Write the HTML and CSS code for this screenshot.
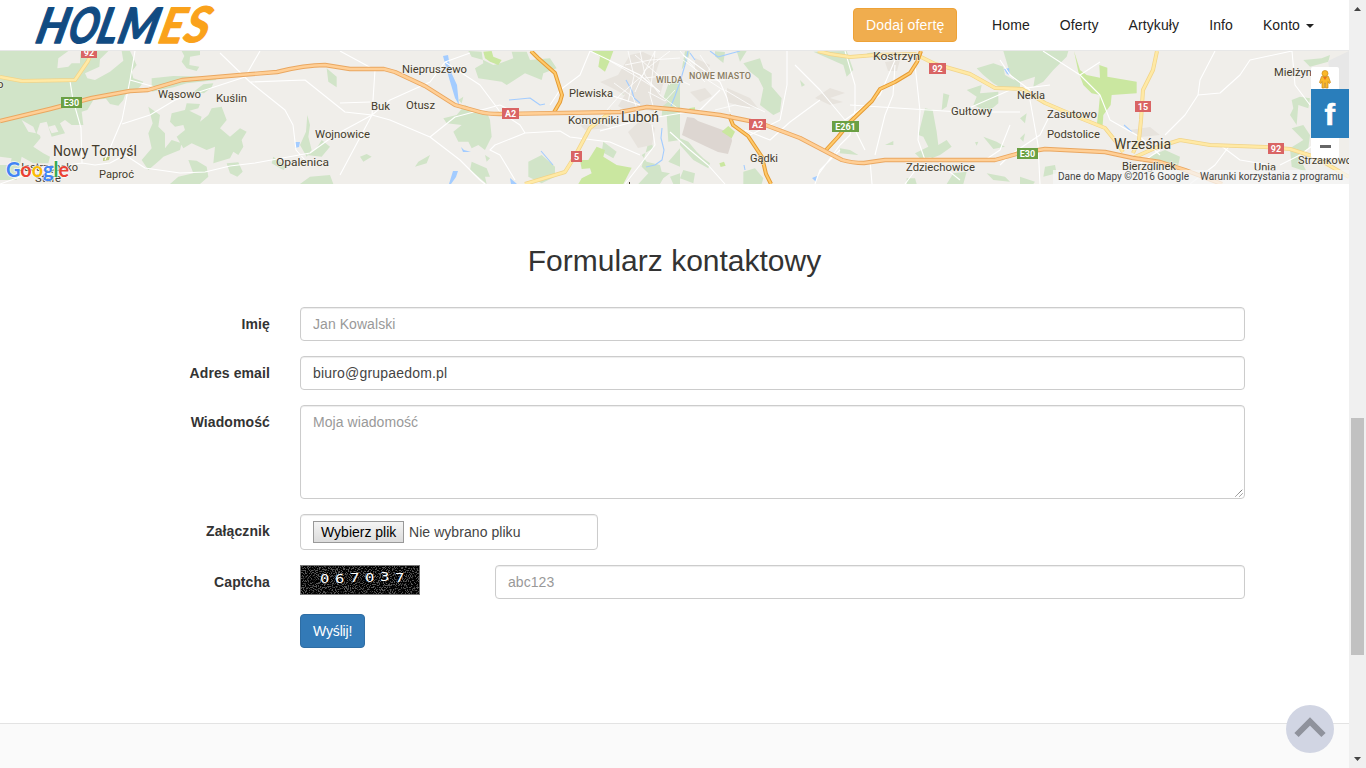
FILE: index.html
```html
<!DOCTYPE html>
<html lang="pl">
<head>
<meta charset="utf-8">
<title>Holmes - kontakt</title>
<link rel="stylesheet" href="styles.css">
</head>
<body>
<div class="page">
  <header class="navbar">
    <svg class="logo" width="190" height="50" viewBox="32 0 190 50" role="img" aria-label="HOLMES">
      <g class="logo-text" transform="translate(34 43) skewX(-14)">
        <text x="0" y="0" textLength="31" lengthAdjust="spacingAndGlyphs">H</text>
        <text x="32" y="0" textLength="29" lengthAdjust="spacingAndGlyphs">O</text>
        <text x="61" y="0" textLength="20" lengthAdjust="spacingAndGlyphs">L</text>
        <text x="82" y="0" textLength="39" lengthAdjust="spacingAndGlyphs">M</text>
        <text class="logo-accent" x="123" y="0" textLength="24" lengthAdjust="spacingAndGlyphs">E</text>
        <text class="logo-accent" x="148" y="-1" textLength="24" lengthAdjust="spacingAndGlyphs">S</text>
      </g>
    </svg>
    <nav class="nav">
      <a class="btn btn-warning">Dodaj ofertę</a>
      <a class="nav-link">Home</a>
      <a class="nav-link">Oferty</a>
      <a class="nav-link">Artykuły</a>
      <a class="nav-link">Info</a>
      <a class="nav-link">Konto <span class="caret"></span></a>
    </nav>
  </header>

  <section class="map">
    <svg class="map-canvas" width="1349" height="133" viewBox="0 51 1349 133">
      <rect x="0" y="51" width="1349" height="133" fill="#f0eeea"/>
      <!-- forests -->
      <g class="forest">
        <g transform="scale(.33333)">
          <path d="M0 153H205L175 175 172 205 205 200 215 190 240 190 240 165 245 153H325L300 178 298 200 255 220 262 235 285 240 330 215 370 182 365 153H390L410 195 395 215 400 235 430 245 420 260 405 272 390 275 375 285 370 300 355 317 330 312 318 296 280 300 262 330 245 335 250 375 215 375 195 360 180 370 195 400 155 410 140 365 120 370 110 400 125 410 100 440 130 460 150 470 145 490 100 490 65 470 50 540 0 540Z"/>
          <path d="M545 153H600V165L570 170 568 195 598 200 590 213 560 205 545 185 553 168ZM455 235 520 228 640 230 650 240 560 250 520 262 455 275ZM610 253 640 250 635 262 612 280 580 276ZM515 340 555 330 560 310 600 312 595 325 568 332 605 350 600 365 625 345 635 325 665 320 680 360 660 385 690 410 720 385 740 395 725 420 730 440 715 465 700 455 690 475 640 490 645 440 620 450 575 430 550 445 530 410 555 390 550 375 525 380 510 365ZM445 320 480 345 475 380 495 400 495 445 515 420 545 430 540 450 490 470 480 480 445 510 425 480 455 445 445 400 458 370ZM565 480 590 482 620 500 625 530 600 552H510L535 530 580 520ZM680 490 715 487 728 515 712 530 690 520ZM980 205 1010 230 1010 262 985 245ZM922 345 930 375 925 410 935 450 920 470 900 435 918 395ZM965 420 950 445 920 465 965 470 990 440ZM820 470 860 500 850 510 815 490ZM930 530 990 525 1000 552H900Z"/>
        </g>
        <g transform="translate(340 45) scale(.33333)">
          <path d="M385 18 425 20 430 55 405 70 415 100 485 110 500 120 555 85 605 105 610 85 650 70 630 40 570 45 560 20H515L520 40 480 55 460 60 430 45 395 35ZM350 210 375 180 400 195 440 200 450 225 455 275 435 315 415 300 395 310 385 290 355 290 340 260 365 240 320 235 310 220ZM605 330 645 365 645 395 605 415 565 395 565 350ZM395 350 440 370 450 395 435 395 440 417 420 400 390 375ZM840 100 880 110 850 150 835 135ZM930 275 940 310 905 330 920 350 960 360 965 380 990 385 970 400 960 417H895L925 385 905 365ZM985 130 1020 115V285L985 290 980 210ZM985 350 1020 310V365ZM790 290 830 320 820 340 785 320ZM60 335 80 327 95 335 70 350ZM235 350 270 330 260 355 225 365ZM435 330 450 340 440 350ZM990 395 1020 385V417H1000ZM355 165 370 155 365 175Z"/>
        </g>
        <g transform="translate(680 45) scale(.33333)">
          <path d="M170 18H200L180 50ZM190 55 240 40 250 70 275 85 275 125 305 160 300 200 280 210 240 180 250 130 235 100 210 80ZM400 20 500 18 520 75 500 95 490 60ZM560 25 595 20 590 45ZM890 70 940 55 970 65 975 90 1020 115V130L965 130 940 115 910 90ZM860 135 905 120 900 145 955 140 955 175 925 200 880 180 890 155ZM790 145 808 150 800 185 785 195ZM735 190 758 195 770 260 775 300 765 335 720 340 705 325 745 305 730 275 715 270ZM750 315 800 285 815 305 780 330 755 340ZM615 300 640 288 640 300ZM885 292 895 290 890 302ZM910 275 950 290 975 305 940 312ZM480 310 510 315 535 330 480 325ZM0 280 25 290 50 320 70 340 90 355 85 370 40 345 0 300ZM10 375 45 385 40 415 0 400ZM190 380 225 370 250 400 245 417H190ZM820 385 860 380 850 417H800ZM920 385 975 395 990 410 940 405ZM680 400 705 400 710 417H680ZM360 105 375 120 365 125ZM970 18H1020V130L990 85Z"/>
        </g>
        <g transform="translate(600 48) scale(.33333)">
          <path d="M205 108 240 90 215 195 185 205 190 150ZM270 10 262 40 245 65 255 10ZM345 10 375 12 370 45 345 25Z"/>
        </g>
        <g transform="translate(1020 45) scale(.33333)">
          <path d="M0 18H145L140 35 100 75 70 110 40 125 45 95 0 110ZM0 220 20 205 15 235ZM815 165 840 155 870 160 865 190 835 180 830 240 810 210 820 190ZM815 250 850 240 870 270 865 310 835 330 860 380 815 365 810 310 850 285ZM385 335 435 315 480 335 475 360 440 365 410 350ZM75 365 105 360 110 385 70 395ZM0 280 15 265 10 290ZM0 395 45 410 40 417H0ZM850 45 905 40 930 30 925 50 870 65Z"/>
        </g>
      </g>
      <!-- clearings -->
      <g class="ground" transform="scale(.33333)">
        <path d="M65 360 100 380 108 400 85 395ZM145 380 165 375 175 395 155 400ZM0 470 35 475 30 495 0 495ZM120 405 150 410 160 435 125 430Z"/>
      </g>
      <!-- built-up areas -->
      <g class="urban">
        <path d="M630 55 643 52 660 60 655 75 665 78 660 95 668 102 655 112 640 108 628 112 618 106 625 95 612 88 600 82 618 75ZM643 118 655 128 652 145 638 148 628 132ZM727 88 750 98 758 108 740 106 727 102ZM690 92 705 88 712 96 700 102ZM695 58 710 65 706 75 695 70ZM580 125 600 123 610 128 585 130ZM1130 130 1150 127 1160 135 1141 137ZM885 62 900 60 897 71 888 71ZM815 98 830 88 845 93 830 98 843 102 830 105Z"/>
        <path class="urban-dark" d="M687 117 694 118 698 121 731 133 732 141 728 154 718 152 705 146 682 135Z"/>
        <path class="urban-cool" d="M1328 61 1349 51V105H1335Z"/>
      </g>
      <!-- parks -->
      <g class="park">
        <g transform="translate(340 45) scale(.33333)"><path d="M430 20 455 18 460 35 485 45 475 60 450 50 435 40ZM755 18H820L810 45 795 80 775 65 780 35ZM720 345 745 345 770 305 795 315 790 335 830 360 875 368 850 417H715L725 400 755 385 750 370 725 372Z"/></g>
        <g transform="translate(680 45) scale(.33333)"><path d="M125 260 145 243 165 260 155 280ZM118 355 132 350 137 362 122 366ZM25 190 45 187 45 197Z"/></g>
        <g transform="translate(1020 45) scale(.33333)"><path d="M162 18 180 75 200 90 240 98 238 60 262 68 262 95 350 110 350 145 275 150 272 180 250 210 248 240 230 240 235 205 240 150 215 145 190 120 175 80Z"/></g>
        <path class="sand" d="M103 158 110 156 109 160 103 161Z"/>
      </g>
      <!-- water -->
      <g class="water">
        <path d="M443 56 448 55 451 72 457 85 459 105 455 98 449 78ZM449 184 453 171 458 171 456 177 451 184ZM461 147 464 150 471 152 463 152ZM510 178 517 184H511ZM295 142 300 142 299 147 295 148ZM1004 69 1009 68 1010 75 1007 74ZM812 178 817 176 816 182Z"/>
        <path class="river" d="M509 100 520 99 530 98 540 105 545 104M541 151 553 165M626 80 632 91 634 98 640 103M662 128 661 138 664 150 662 160 655 165 646 167M688 51 685 65 680 82 675 96 671 106M710 51 718 57 740 51M744 165 745 170M1124 125 1132 132M695 60 690 53"/>
      </g>
      <!-- minor roads -->
      <g class="minor">
        <path d="M70 81 73 100 81 128 82 163 95 165 110 163 125 155 145 168 180 173 205 172 230 166 255 163 310 153 335 135 372 115M82 163 45 168 0 184M135 51 130 80 122 120 105 160M122 124 150 115 175 100 205 90 245 77 260 51M130 80 155 87M220 53 250 82 285 110 293 125 296 150 305 160M250 82 305 80 345 112 372 115 390 100 430 82 445 62 470 53M372 115 375 70 340 51M372 115 390 120 430 137 460 160 480 180 485 184M430 137 455 117 500 105M372 115 340 175M445 62 480 85 495 105 500 112M340 103 370 102"/>
        <path d="M500 112 520 125 525 133 495 145 490 150 500 155 515 180M525 133 560 131 570 137 610 142 640 155M510 110 500 105M590 51 580 75 560 90 550 105M590 51 640 75 660 92M610 95 640 105M720 90 700 110 640 120 600 131M652 125 655 145 640 165 625 184M683 55 720 82 727 98 730 112M670 132 690 150 708 165 725 184M780 120 787 85 787 51M735 125 750 135 780 120M745 130 770 140 790 122 820 100M795 65 820 90 845 120M845 51 855 85 855 110 850 135 840 145 818 175M895 60 880 95 845 120M895 65 893 95 885 115 875 155M850 105 960 112 1020 112M920 111 918 140 925 160M960 112 1010 90 1050 85M840 150 830 160 820 170 815 184M855 130 865 150M1000 60 1010 75 1030 90M1010 125 1000 150 985 160M870 160 872 184M915 65 920 111"/>
        <path d="M1043 51 1080 75 1100 95 1110 120 1140 137 1160 155M1080 75 1100 62M1215 51 1200 80 1198 95 1185 115 1165 135M1198 95 1220 93 1240 75 1250 60 1292 51 1295 85 1310 105M1230 145 1215 165 1190 184M1220 145 1240 160 1270 165M1030 100 1038 145 1040 184M1050 115 1040 135 1010 155 1000 165M1320 140 1300 155 1280 165M1160 150 1130 170M960 180 945 168 920 164 905 184"/>
        <path class="street" d="M640 51 645 75 660 95 680 110M600 118 620 95 643 75 655 51M635 55 670 85M655 51 650 95 657 120M670 51 645 70 635 92M645 78 670 75 690 85M625 65 650 60 680 58M680 51 690 63 700 75 723 90M683 60 710 80 725 80M700 55 710 70M695 72 705 82M648 92 665 101 675 90M715 110 735 105 750 108M610 61 634 75 653 87M614 83 633 97 638 112M725 90 750 105 765 112M628 51 634 76 628 102"/>
      </g>
      <!-- yellow roads -->
      <path class="yellow-case" d="M0 77 22 81 75 80 88 61 92 51M525 184 565 172 575 156 590 128 612 111M818 51 830 54 850 57 875 55 915 54 935 64 970 74 995 88 1022 89 1045 103 1080 118 1105 128 1117 143 1123 152M1157 51 1153 70 1143 90 1141 120 1139 140 1133 153M1133 158 1155 148 1180 140 1210 145 1265 147 1290 149 1315 157 1349 177"/>
      <path class="yellow" d="M0 77 22 81 75 80 88 61 92 51M525 184 565 172 575 156 590 128 612 111M818 51 830 54 850 57 875 55 915 54 935 64 970 74 995 88 1022 89 1045 103 1080 118 1105 128 1117 143 1123 152M1157 51 1153 70 1143 90 1141 120 1139 140 1133 153M1133 158 1155 148 1180 140 1210 145 1265 147 1290 149 1315 157 1349 177"/>
      <!-- trunk roads -->
      <path class="trunk-case" d="M531 51 538 58 555 73 562 95 560 102 553 114M921 51 917 62 910 73 895 82 880 89 872 101 850 122 838 137 826 150M729 115 733 125 748 136 762 157 766 174 771 184"/>
      <path class="trunk" d="M531 51 538 58 555 73 562 95 560 102 553 114M921 51 917 62 910 73 895 82 880 89 872 101 850 122 838 137 826 150M729 115 733 125 748 136 762 157 766 174 771 184"/>
      <!-- A2 motorway -->
      <path class="motor-case" d="M0 121 50 109 92 98 130 91 148 90 182 80 240 75 277 72Q305 65 325 65L350 69H384L395 72 425 86 455 105 480 112Q487 114 500 114L620 112 647 107 680 110 720 115 760 123 800 138 842 160Q852 163 864 163L885 160H995L1020 153 1045 149 1105 152 1133 158 1160 162 1185 170 1222 184"/>
      <path class="motor" d="M0 121 50 109 92 98 130 91 148 90 182 80 240 75 277 72Q305 65 325 65L350 69H384L395 72 425 86 455 105 480 112Q487 114 500 114L620 112 647 107 680 110 720 115 760 123 800 138 842 160Q852 163 864 163L885 160H995L1020 153 1045 149 1105 152 1133 158 1160 162 1185 170 1222 184"/>
      <!-- place names -->
      <g class="place">
        <text x="-3" y="88">o</text>
        <text x="158" y="98" textLength="43" lengthAdjust="spacingAndGlyphs">Wąsowo</text>
        <text x="216" y="102" textLength="31" lengthAdjust="spacingAndGlyphs">Kuślin</text>
        <text x="315" y="138" textLength="55" lengthAdjust="spacingAndGlyphs">Wojnowice</text>
        <text x="276" y="166" textLength="53" lengthAdjust="spacingAndGlyphs">Opalenica</text>
        <text x="99" y="178" textLength="35" lengthAdjust="spacingAndGlyphs">Paproć</text>
        <text x="18" y="171" textLength="60" lengthAdjust="spacingAndGlyphs">Jastrzębsko</text>
        <text x="35" y="182" textLength="26" lengthAdjust="spacingAndGlyphs">Stare</text>
        <text x="402" y="73" textLength="65" lengthAdjust="spacingAndGlyphs">Niepruszewo</text>
        <text x="371" y="110" textLength="19" lengthAdjust="spacingAndGlyphs">Buk</text>
        <text x="406" y="109" textLength="29" lengthAdjust="spacingAndGlyphs">Otusz</text>
        <text x="569" y="97" textLength="44" lengthAdjust="spacingAndGlyphs">Plewiska</text>
        <text x="568" y="124" textLength="51" lengthAdjust="spacingAndGlyphs">Komorniki</text>
        <text x="873" y="60" textLength="47" lengthAdjust="spacingAndGlyphs">Kostrzyn</text>
        <text x="951" y="115" textLength="41" lengthAdjust="spacingAndGlyphs">Gułtowy</text>
        <text x="750" y="162" textLength="28" lengthAdjust="spacingAndGlyphs">Gądki</text>
        <text x="906" y="171" textLength="69" lengthAdjust="spacingAndGlyphs">Zdziechowice</text>
        <text x="1017" y="99" textLength="28" lengthAdjust="spacingAndGlyphs">Nekla</text>
        <text x="1047" y="118" textLength="50" lengthAdjust="spacingAndGlyphs">Zasutowo</text>
        <text x="1047" y="138" textLength="53" lengthAdjust="spacingAndGlyphs">Podstolice</text>
        <text x="1122" y="170" textLength="54" lengthAdjust="spacingAndGlyphs">Bierzglinek</text>
        <text x="1254" y="171" textLength="22" lengthAdjust="spacingAndGlyphs">Unia</text>
        <text x="1274" y="76" textLength="38" lengthAdjust="spacingAndGlyphs">Mielżyn</text>
        <text x="1298" y="164" textLength="54" lengthAdjust="spacingAndGlyphs">Strzałkowo</text>
      </g>
      <path d="M629.500 182v2" stroke="#443c2c"/>
      <g class="place town">
        <text x="53" y="156" textLength="84">Nowy Tomyśl</text>
        <text x="621" y="122" textLength="38">Luboń</text>
        <text x="1114" y="149" textLength="57">Września</text>
      </g>
      <g class="place district">
        <text x="656" y="83" textLength="27">WILDA</text>
        <text x="689" y="79" textLength="62">NOWE MIASTO</text>
      </g>
      <!-- road shields -->
      <g class="shield">
        <rect class="red" x="81" y="47" width="16" height="11"/><text x="89" y="56">92</text>
        <rect class="green" x="61" y="97" width="21" height="11"/><text x="71.500" y="106">E30</text>
        <rect class="red" x="502" y="108" width="17" height="11"/><text x="510.500" y="117">A2</text>
        <rect class="red" x="571" y="151" width="11" height="11"/><text x="576.500" y="160">5</text>
        <rect class="red" x="749" y="119" width="17" height="11"/><text x="757.500" y="128">A2</text>
        <rect class="green" x="832" y="121" width="27" height="11"/><text x="845.500" y="130">E261</text>
        <rect class="red" x="929" y="63" width="17" height="11"/><text x="937.500" y="72">92</text>
        <rect class="green" x="1017" y="148" width="21" height="11"/><text x="1027.500" y="157">E30</text>
        <rect class="red" x="1135" y="101" width="16" height="11"/><text x="1143" y="110">15</text>
        <rect class="red" x="1268" y="143" width="16" height="11"/><text x="1276" y="152">92</text>
      </g>
      <!-- attribution -->
      <g class="google">
        <text x="6" y="177" textLength="63" lengthAdjust="spacingAndGlyphs"><tspan fill="#4285f4">G</tspan><tspan fill="#ea4335">o</tspan><tspan fill="#fbbc05">o</tspan><tspan fill="#4285f4">g</tspan><tspan fill="#34a853">l</tspan><tspan fill="#ea4335">e</tspan></text>
      </g>
      <rect x="1053" y="170" width="296" height="14" fill="#f5f5f5" fill-opacity=".75"/>
      <g class="credits">
        <text x="1058" y="180" textLength="131" lengthAdjust="spacingAndGlyphs">Dane do Mapy ©2016 Google</text>
        <text x="1200" y="180" textLength="143" lengthAdjust="spacingAndGlyphs">Warunki korzystania z programu</text>
      </g>
      <!-- map controls -->
      <rect x="1311" y="67" width="28" height="30" rx="2" fill="#fff"/>
      <g fill="#fbb829" stroke="#c98a1b" stroke-width=".7">
        <path d="M1321.500 76.500h7l2 6-1.500 1-1-2V88h-2.500v-5h-1v5h-2.500v-6.500l-1 2-1.500-1Z"/>
        <circle cx="1325" cy="73.500" r="3"/>
      </g>
      <path d="M1323 77h4l-2 3Z" fill="#e8711c"/>
      <path d="M1311 130h28v26a2 2 0 0 1-2 2h-24a2 2 0 0 1-2-2Z" fill="#fff"/>
      <rect x="1320" y="145" width="11" height="3" fill="#666"/>
    </svg>
    <a class="facebook" aria-label="Facebook"><svg width="38" height="49" viewBox="0 0 38 49"><text x="13.500" y="36" textLength="10.500" lengthAdjust="spacingAndGlyphs">f</text></svg></a>
  </section>

  <main class="contact">
    <h2>Formularz kontaktowy</h2>
    <form class="form">
      <div class="row">
        <label for="name">Imię</label>
        <input id="name" class="control" type="text" placeholder="Jan Kowalski">
      </div>
      <div class="row">
        <label for="email">Adres email</label>
        <input id="email" class="control email" type="text" value="biuro@grupaedom.pl">
      </div>
      <div class="row">
        <label for="message">Wiadomość</label>
        <div class="textarea-wrap">
          <textarea id="message" class="control" placeholder="Moja wiadomość"></textarea>
          <svg class="grip" width="8" height="8" viewBox="0 0 8 8"><path d="M.5 7.500l7-7M4.500 7.500l3-3"/></svg>
        </div>
      </div>
      <div class="row">
        <label>Załącznik</label>
        <div class="control file"><span class="file-button">Wybierz plik</span><span>Nie wybrano pliku</span></div>
      </div>
      <div class="row">
        <label for="captcha">Captcha</label>
        <div class="captcha-row">
          <svg class="captcha" width="120" height="30" viewBox="0 0 120 30">
            <filter id="noise" x="0" y="0" width="100%" height="100%" color-interpolation-filters="sRGB">
              <feTurbulence type="fractalNoise" baseFrequency=".93" numOctaves="2" seed="7"/>
              <feColorMatrix values="9 0 0 0 -4.500  9 0 0 0 -4.500  9 0 0 0 -4.500  0 0 0 0 1"/>
              <feComponentTransfer><feFuncR type="linear" slope=".34"/><feFuncG type="linear" slope=".34"/><feFuncB type="linear" slope=".34"/></feComponentTransfer>
            </filter>
            <rect width="120" height="30" fill="#000"/>
            <rect width="120" height="30" filter="url(#noise)"/>
            <rect x=".5" y=".5" width="119" height="29" fill="none" stroke="#777"/>
            <g class="digits">
              <text x="16.700" y="18">0</text><text x="29.200" y="18">6</text><text x="41.700" y="17">7</text>
              <text x="54.200" y="17">0</text><text x="66.700" y="16">3</text><text x="79.200" y="17">7</text>
            </g>
          </svg>
          <input id="captcha" class="control" type="text" placeholder="abc123">
        </div>
      </div>
      <div class="row">
        <span></span>
        <button class="btn btn-primary" type="button">Wyślij!</button>
      </div>
    </form>
  </main>
  <footer class="footer"></footer>
</div>

<div class="scrollbar">
  <svg width="17" height="17" viewBox="0 0 17 17"><path d="M5 11h7L8.500 7Z"/></svg>
  <div class="thumb"></div>
  <svg class="scroll-down" width="17" height="17" viewBox="0 0 17 17"><path d="M5 6h7l-3.500 4Z"/></svg>
</div>

<a class="to-top" aria-label="Do góry">
  <svg width="48" height="48" viewBox="0 0 48 48"><path d="M10.500 30 24 16.500 37.500 30"/></svg>
</a>
</body>
</html>
```
FILE: styles.css
```css
* { box-sizing: border-box; }

body {
  margin: 0;
  height: 768px;
  overflow: hidden;
  display: flex;
  font: 14px/20px "Liberation Sans", Arial, sans-serif;
  color: #333;
  background: #fff;
}

.page { width: 1349px; height: 768px; display: flex; flex-direction: column; }

/* Navigation */
.navbar {
  height: 51px;
  flex: none;
  display: flex;
  align-items: flex-start;
  justify-content: space-between;
  padding: 0 20px 0 32px;
  border-bottom: 1px solid #e7e7e7;
}
.logo { display: block; overflow: visible; }
.logo-text { font: italic 700 49px Lato, sans-serif; fill: #114b82; stroke: #114b82; stroke-width: 1.3px; stroke-linejoin: round; }
.logo-accent { fill: #faa21b; stroke: #faa21b; }
.nav { display: flex; align-items: center; height: 50px; letter-spacing: .1px; }
.nav-link { padding: 15px; color: #222; }
.caret {
  display: inline-block;
  margin-left: 2px;
  vertical-align: middle;
  border-top: 4px solid #222;
  border-left: 4px solid transparent;
  border-right: 4px solid transparent;
}

.btn {
  display: inline-block;
  height: 34px;
  padding: 6px 12px;
  border: 1px solid;
  border-radius: 4px;
  font: inherit;
  color: #fff;
}
.btn-warning { width: 104px; margin-right: 20px; background: #f0ad4e; border-color: #eea236; white-space: nowrap; letter-spacing: .17px; }
.btn-primary { width: 65px; justify-self: start; background: #337ab7; border-color: #2e6da4; letter-spacing: -.15px; }

/* Map */
.map { position: relative; height: 133px; flex: none; }
.map-canvas { display: block; }
.map-canvas path { stroke-linejoin: round; }
.forest { fill: #d1e4c8; }
.ground { fill: #f0eeea; }
.park { fill: #cae7a0; }
.sand { fill: #c2cd83; }
.urban { fill: #e7e3dd; }
.urban-dark { fill: #ddd6d1; }
.urban-cool { fill: #e7e7e7; }
.water { fill: #a3ccff; }
.river { fill: none; stroke: #a3ccff; stroke-width: 1.1; }
.minor { fill: none; stroke: #fff; stroke-width: 1.1; }
.street { stroke-width: .8; }
.yellow-case { fill: none; stroke: #f1d489; stroke-width: 4; }
.yellow { fill: none; stroke: #ffe9a5; stroke-width: 2.6; }
.trunk-case { fill: none; stroke: #e59b35; stroke-width: 4; }
.trunk { fill: none; stroke: #ffc96a; stroke-width: 2; }
.motor-case { fill: none; stroke: #eaa760; stroke-width: 4.4; }
.motor { fill: none; stroke: #ffcf96; stroke-width: 2.6; }
.place {
  font: 11.5px Roboto, sans-serif;
  fill: #443c2c;
  stroke: #f5f3ef;
  stroke-width: 1.5px;
  stroke-opacity: .7;
  paint-order: stroke;
}
.town { font-size: 14px; }
.district { font-size: 9px; font-weight: 500; fill: #8a7c62; }
.shield { font: 700 9px Roboto, sans-serif; text-anchor: middle; fill: #fff; }
.red { fill: #d96464; }
.green { fill: #6ba044; }
.google {
  font: 700 20px Lato, sans-serif;
  stroke: #fff;
  stroke-width: 1.5px;
  stroke-opacity: .8;
  paint-order: stroke;
}
.credits { font: 10px Roboto, sans-serif; fill: #444; }
.facebook { position: absolute; top: 38px; right: 0; width: 38px; height: 49px; background: #2a7ebb; }
.facebook svg { display: block; }
.facebook text { font: 700 29px "Liberation Sans", sans-serif; fill: #fff; stroke: #fff; stroke-width: .5px; }

/* Contact form */
.contact { flex: 1; padding: 60px 0 0 105px; }
h2 { width: 1139px; margin: 0 0 30px; font-size: 30px; font-weight: 400; line-height: 33px; text-align: center; }
.form { display: flex; flex-direction: column; gap: 15px; }
.row { display: grid; grid-template-columns: 165px 945px; column-gap: 30px; }
label { padding-top: 7px; font-weight: 700; text-align: right; letter-spacing: .1px; }
.control {
  display: block;
  width: 100%;
  height: 34px;
  margin: 0;
  padding: 6px 12px;
  border: 1px solid #ccc;
  border-radius: 4px;
  background: #fff;
  box-shadow: inset 0 1px 1px rgba(0, 0, 0, .075);
  font: inherit;
  letter-spacing: .06px;
  color: #444;
}
.control::placeholder { color: #999; opacity: 1; }
.email { letter-spacing: .19px; }
textarea.control { height: 94px; resize: none; }
.textarea-wrap { position: relative; }
.grip { position: absolute; right: 2px; bottom: 2px; fill: none; stroke: #666; stroke-width: 1; stroke-dasharray: 1.2 .4; }
.file { width: 298px; height: 36px; display: flex; align-items: flex-start; gap: 5px; line-height: 22px; }
.file-button {
  width: 91px;
  height: 22px;
  padding: 0 7px;
  border: 1px solid #999;
  background: linear-gradient(#f4f4f4, #dcdcdc);
  color: #000;
  line-height: 21px;
  letter-spacing: 0;
  white-space: nowrap;
}
.captcha-row { display: grid; grid-template-columns: 120px 750px; justify-content: space-between; }
.captcha { display: block; }
.digits { font: 13px "DejaVu Sans Mono", monospace; fill: #fff; transform: scaleX(1.2); }

.footer { height: 45px; flex: none; background: #fafafa; border-top: 1px solid #e3e3e3; }

/* Scrollbar */
.scrollbar { width: 17px; height: 768px; display: flex; flex-direction: column; background: #f0f0f0; }
.scrollbar svg { display: block; fill: #444; }
.scrollbar .scroll-down { margin-top: auto; }
.thumb { width: 13px; height: 237px; margin: 401px 0 0 2px; background: #c1c1c1; }

.to-top { position: fixed; left: 1286px; top: 705px; width: 48px; height: 48px; border-radius: 50%; background: #d1d5e3; }
.to-top svg { display: block; fill: none; stroke: #8f929c; stroke-width: 6; }
```
